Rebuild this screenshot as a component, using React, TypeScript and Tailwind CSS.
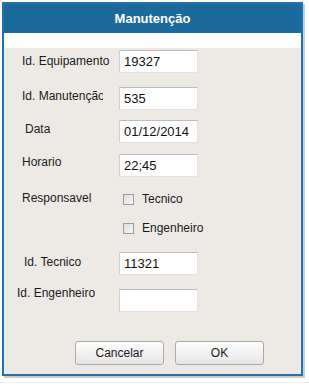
import React from "react";

const font = { fontFamily: '"Liberation Sans", Arial, sans-serif' };

function Field({ label, value, labelClass, labelOffset, rowClass }: { label: string; value: string; labelClass?: string; labelOffset: string; rowClass: string }) {
    return (
        <div className={`flex items-start h-[23px] ${rowClass}`}>
            <div className="w-[115px] shrink-0">
                <div className={`overflow-hidden whitespace-nowrap text-[12px] leading-[14px] text-[#1a1a1a] ${labelOffset} ${labelClass ?? "ml-[18px] w-[88px]"}`}>
                    {label}
                </div>
            </div>
            <div className="w-[79px] h-[23px] bg-white border border-[#e4e1dc] border-t-[#bdbdbd] border-l-[#cfcfcf] pl-[4px] flex items-center text-[13px] text-[#111]">
                {value}
            </div>
        </div>
    );
}

function Check({ label }: { label: string }) {
    return (
        <div className="flex items-center gap-[8px] ml-[4px]">
            <div className="w-[11px] h-[11px] border border-[#9c9c9c] bg-gradient-to-br from-[#dcdcdc] to-[#f7f7f7]" />
            <span className="text-[12px] text-[#1a1a1a]">{label}</span>
        </div>
    );
}

export default function App() {
    return (
        <div className="w-[309px] h-[386px] bg-white" style={font}>
            <div className="pl-[2px] pt-[2px] h-[383px] border-b border-dotted border-[#d8d8d8]">
                <div className="w-[301px] h-[374px] border-2 border-[#1a74b6] shadow-[2px_2px_0_#cdcdcd] flex flex-col">
                    {/* Title */}
                    <div className="h-[29px] bg-[#1c6a9b] flex items-center justify-center text-white font-bold text-[13px]">
                        Manutenção
                    </div>
                    <div className="h-[15px] bg-white" />

                    {/* Body */}
                    <div className="flex-1 bg-[#edeae5] flex flex-col">
                        <Field label="Id. Equipamento" value="19327" labelOffset="mt-[4px]" rowClass="mt-[2px]" />
                        <Field label="Id. Manutenção" value="535" labelOffset="mt-[2px]" labelClass="ml-[18px] w-[81px]" rowClass="mt-[14px]" />
                        <Field label="Data" value="01/12/2014" labelOffset="mt-[2px]" labelClass="ml-[21px] w-[60px]" rowClass="mt-[10px]" />
                        <Field label="Horario" value="22;45" labelOffset="mt-[1px]" rowClass="mt-[11px]" />

                        <div className="flex items-center h-[18px] mt-[13px]">
                            <div className="w-[115px] shrink-0 pl-[18px] text-[12px] text-[#1a1a1a] -mt-[3px]">Responsavel</div>
                            <Check label="Tecnico" />
                        </div>
                        <div className="flex items-center h-[18px] mt-[11px]">
                            <div className="w-[115px] shrink-0" />
                            <Check label="Engenheiro" />
                        </div>

                        <Field label="Id. Tecnico" value="11321" labelOffset="mt-[3px]" labelClass="ml-[20px] w-[88px]" rowClass="mt-[15px]" />
                        <Field label="Id. Engenheiro" value="" labelOffset="-mt-[3px]" labelClass="ml-[13px] w-[95px]" rowClass="mt-[14px]" />

                        <div className="flex gap-[11px] ml-[71px] mt-[29px]">
                            {["Cancelar", "OK"].map(t => (
                                <button key={t} className="w-[89px] h-[24px] rounded-[3px] border border-[#a9a9a9] bg-gradient-to-b from-[#fdfdfd] to-[#e6e6e6] text-[12px] text-[#1a1a1a]">
                                    {t}
                                </button>
                            ))}
                        </div>
                    </div>
                </div>
            </div>
        </div>
    );
}
